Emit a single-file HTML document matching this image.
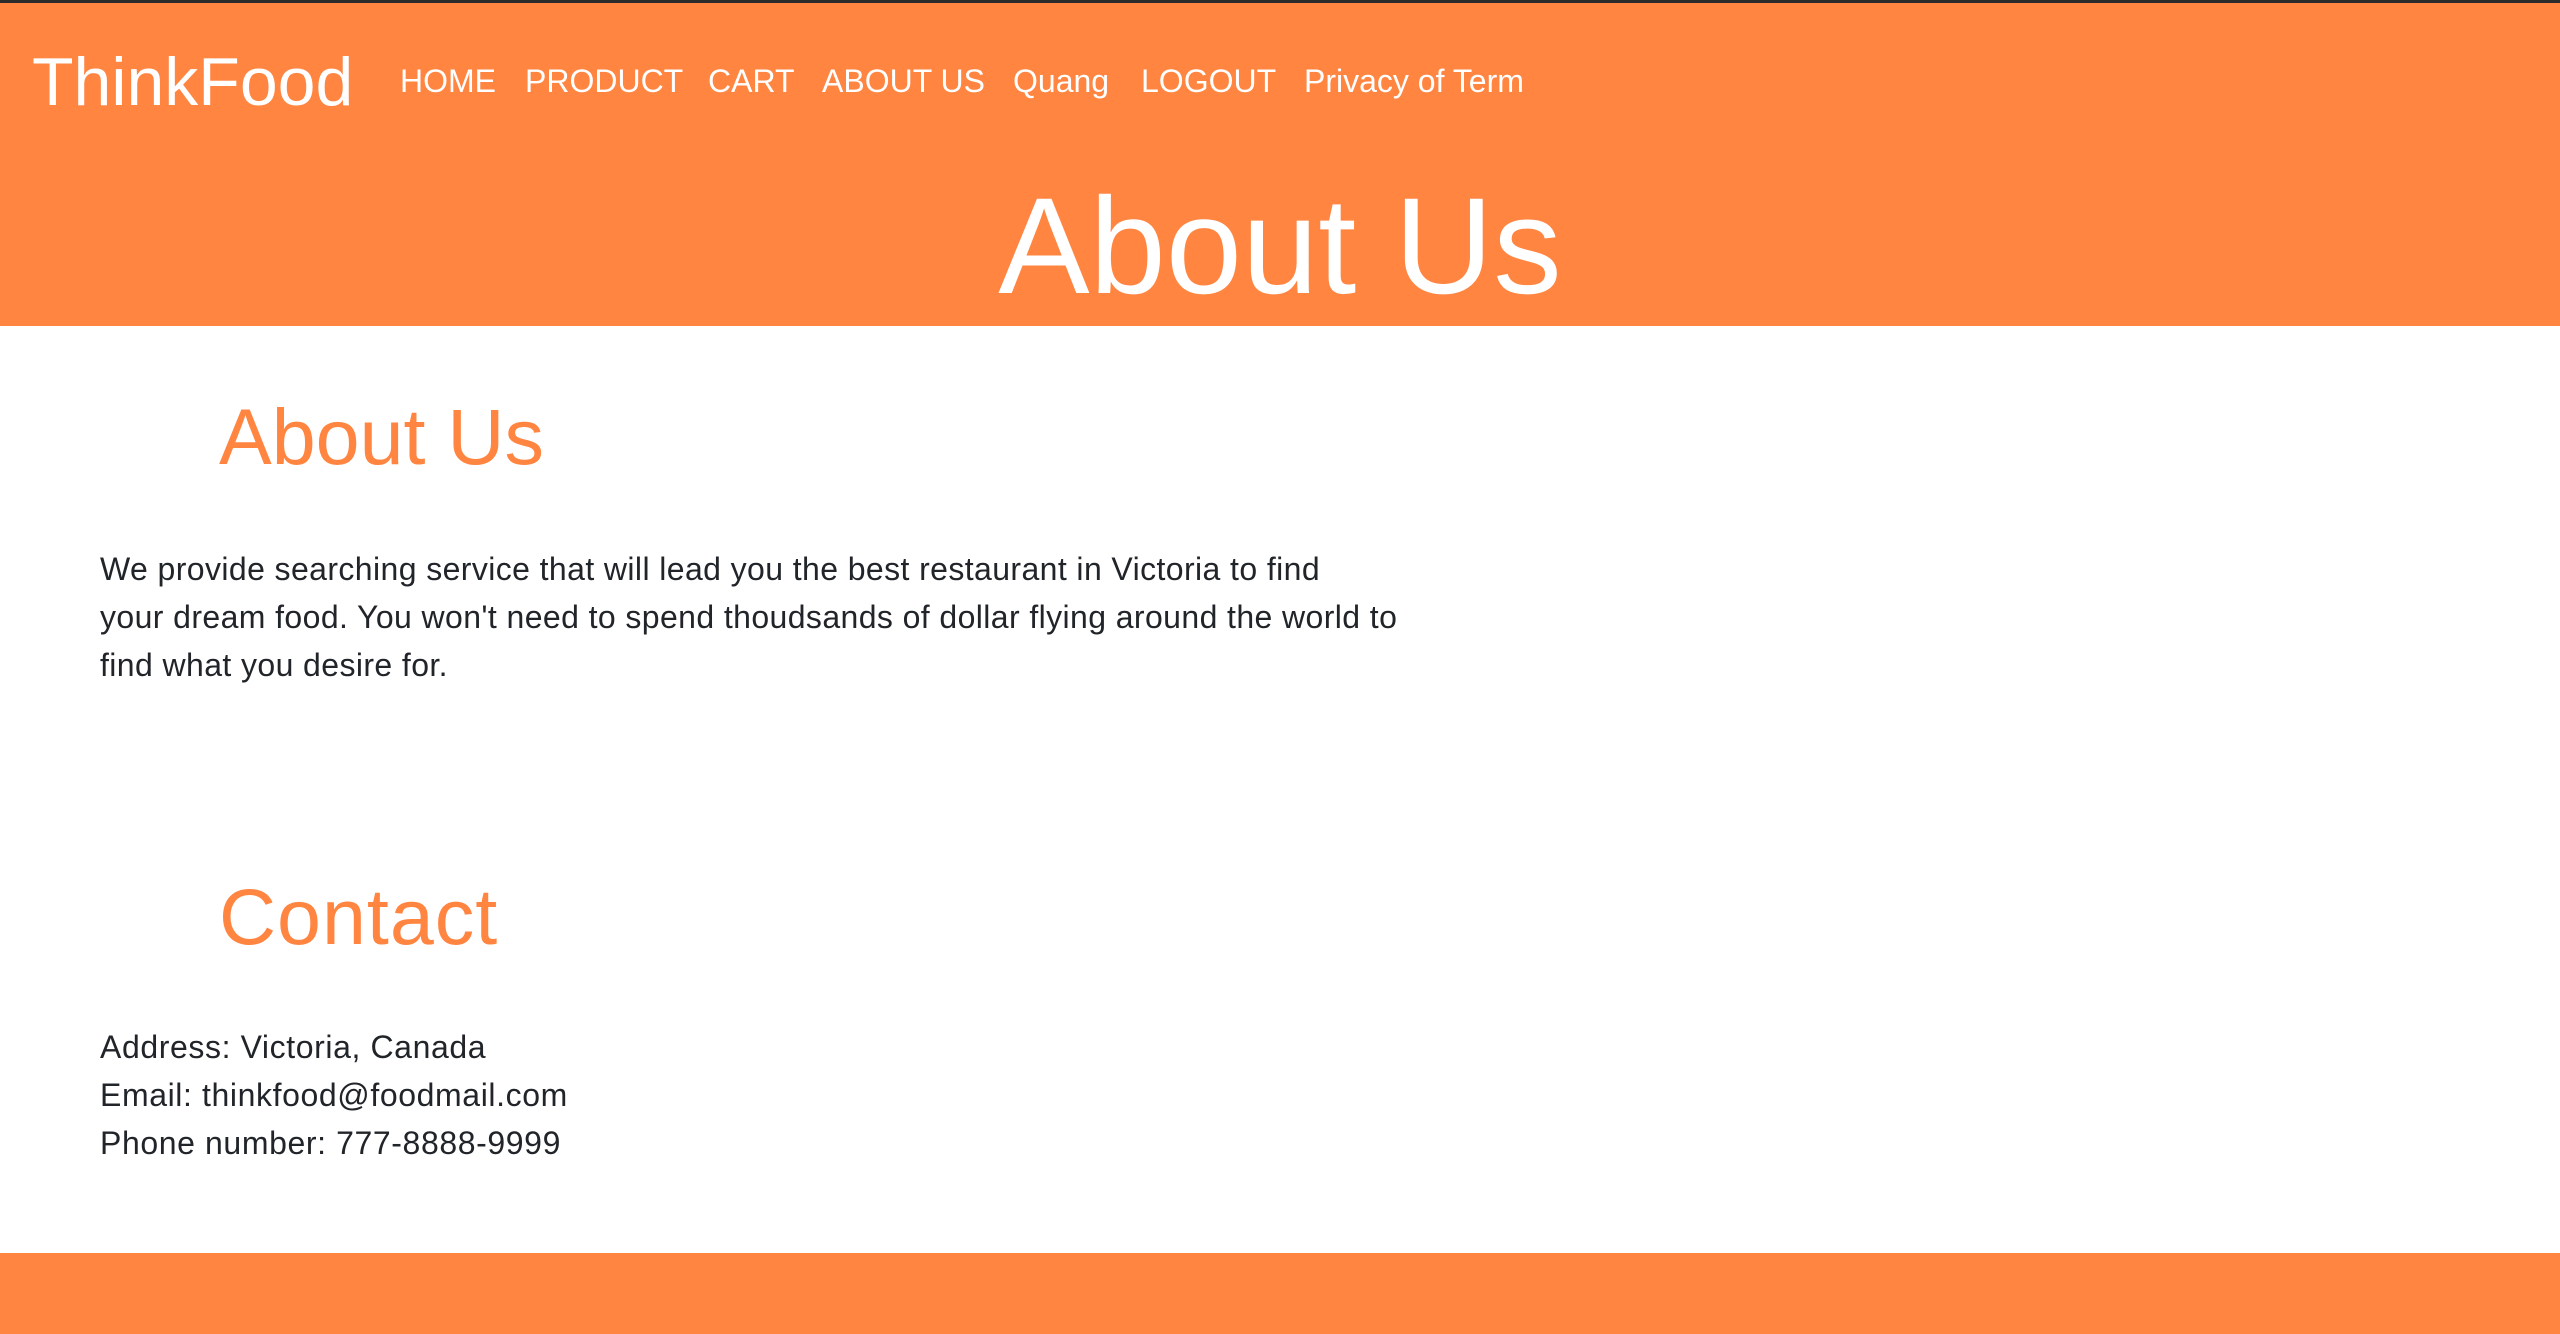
<!DOCTYPE html>
<html><head><meta charset="utf-8"><style>
*{margin:0;padding:0;box-sizing:border-box}
body{width:2560px;height:1334px;position:relative;overflow:hidden;background:#fff;font-family:"Liberation Sans",Arial,sans-serif;color:#212529}
.hdr{position:absolute;left:0;top:0;width:2560px;height:326px;background:#ff8541;border-top:3px solid #2b2b2b}
.ftr{position:absolute;left:0;top:1253px;width:2560px;height:81px;background:#ff8541}
.a{position:absolute;white-space:nowrap;line-height:1}
.w{color:#fff}
.nav{font-size:32px;top:65px}
.o{color:#ff8541}
.p{position:absolute;left:100px;font-size:32px;line-height:48px;white-space:nowrap;letter-spacing:0.4px}
</style></head><body>
<div class="hdr"></div>
<div class="a w" style="left:32px;top:48px;font-size:68px">ThinkFood</div>
<div class="a w nav" style="left:400px">HOME</div>
<div class="a w nav" style="left:525px">PRODUCT</div>
<div class="a w nav" style="left:708px">CART</div>
<div class="a w nav" style="left:822px">ABOUT US</div>
<div class="a w nav" style="left:1013px">Quang</div>
<div class="a w nav" style="left:1141px">LOGOUT</div>
<div class="a w nav" style="left:1304px">Privacy of Term</div>
<div class="a w" style="left:0;width:2560px;text-align:center;top:178px;font-size:137px">About Us</div>
<div class="a o" style="left:219px;top:397px;font-size:79px">About Us</div>
<div class="p" style="top:545px">We provide searching service that will lead you the best restaurant in Victoria to find<br>your dream food. You won't need to spend thoudsands of dollar flying around the world to<br>find what you desire for.</div>
<div class="a o" style="left:219px;top:877px;font-size:79px;letter-spacing:1px">Contact</div>
<div class="p" style="top:1023px;letter-spacing:0.6px">Address: Victoria, Canada<br>Email: thinkfood@foodmail.com<br>Phone number: 777-8888-9999</div>
<div class="ftr"></div>
</body></html>
